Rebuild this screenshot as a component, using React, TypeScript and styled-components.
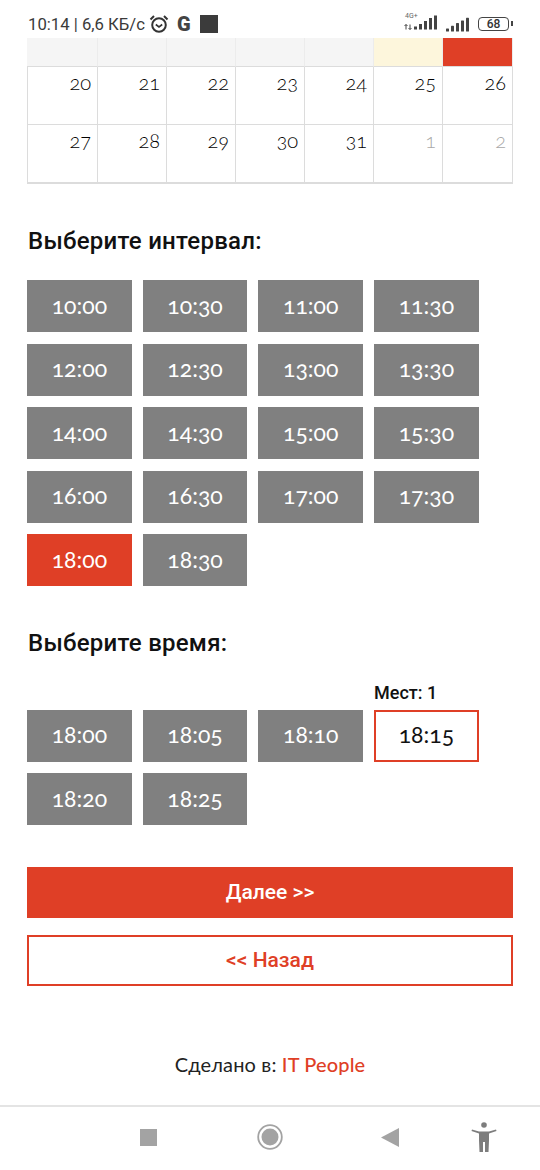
import React from 'react';
import styled, { createGlobalStyle } from 'styled-components';

const accentColor = '#df3f26';
const slotColor = '#808080';
const lineColor = '#dcdcdc';
const bodyFont = '"Lato", "Open Sans", sans-serif';
const headFont = '"Roboto", "Noto Sans", sans-serif';

const GlobalStyle = createGlobalStyle`
  html, body {
    margin: 0;
    padding: 0;
    background: #fff;
  }
`;

const Page = styled.div`
  width: 540px;
  height: 1170px;
  overflow: hidden;
  display: flex;
  flex-direction: column;
  font-family: ${bodyFont};
  color: #111;
`;

const StatusBar = styled.div`
  height: 38px;
  flex: none;
  box-sizing: border-box;
  padding: 10px 31px 0 28px;
  display: flex;
  align-items: center;
  font-family: "Roboto", sans-serif;
  font-size: 16.7px;
  color: #3a3a3a;
`;

const StatusText = styled.span`
  margin-right: 4px;
  white-space: nowrap;
`;

const StatusGlyph = styled.svg`
  flex: none;
`;

const GoogleMark = styled.span`
  font-family: "Roboto", sans-serif;
  font-weight: 900;
  font-size: 20px;
  margin: 0 9px 0 8px;
  color: #444;
`;

const BlackSquare = styled.span`
  width: 18px;
  height: 18px;
  background: #3b3b3b;
`;

const StatusRight = styled.div`
  margin-left: auto;
  display: flex;
  align-items: center;
  gap: 8px;
`;

const Network = styled.div`
  position: relative;
`;

const NetworkLabel = styled.span`
  position: absolute;
  left: 1px;
  top: -3px;
  font-size: 7px;
  line-height: 8px;
  color: #666;
`;

const Battery = styled.div`
  position: relative;
  width: 29px;
  height: 12px;
  border: 1.5px solid #444;
  border-radius: 4px;
  font-size: 12px;
  font-weight: 500;
  line-height: 12px;
  text-align: center;
  color: #333;

  &::after {
    content: '';
    position: absolute;
    right: -5px;
    top: 3px;
    width: 2px;
    height: 5px;
    background: #444;
  }
`;

const Calendar = styled.div`
  margin: 0 27px;
  display: grid;
  grid-template-columns: 71px 69px 69px 69px 69px 69px 70px;
  border-bottom: 1px solid ${lineColor};
`;

const HeaderCell = styled.div<{ $bg: string }>`
  height: 28px;
  background: ${(props) => props.$bg};
  border-right: 1px solid #ececec;
  border-bottom: 1px solid ${lineColor};
`;

const DayCell = styled.div<{ $muted?: boolean }>`
  height: 58px;
  box-sizing: border-box;
  padding: 3px 6px 0 0;
  text-align: right;
  font-size: 20px;
  font-weight: 300;
  line-height: 24px;
  font-variant-numeric: oldstyle-nums;
  color: ${(props) => (props.$muted ? '#a8a8a8' : '#000')};
  border-right: 1px solid ${lineColor};
  border-bottom: 1px solid ${lineColor};

  &:nth-child(7n + 1) {
    border-left: 1px solid ${lineColor};
  }
`;

const Section = styled.section<{ $top: number }>`
  margin: ${(props) => props.$top}px 27px 0;
`;

const Heading = styled.h2`
  margin: 0 0 0 1px;
  font-family: ${headFont};
  font-size: 24px;
  font-weight: 500;
  letter-spacing: 0.25px;
  line-height: 30px;
  color: #111;
`;

const SlotGrid = styled.div<{ $top: number }>`
  margin-top: ${(props) => props.$top}px;
  display: grid;
  grid-template-columns: repeat(4, 104.7px);
  column-gap: 11px;
  row-gap: 11.5px;
`;

const SlotCell = styled.div`
  position: relative;
`;

const SlotButton = styled.button<{ $state?: 'active' | 'picked' }>`
  display: block;
  width: 100%;
  height: 52px;
  box-sizing: border-box;
  padding: 0 0 3px;
  border: ${(props) =>
    props.$state === 'picked' ? `2px solid ${accentColor}` : 'none'};
  border-radius: 0;
  background: ${(props) =>
    props.$state === 'active'
      ? accentColor
      : props.$state === 'picked'
      ? '#fff'
      : slotColor};
  color: ${(props) => (props.$state === 'picked' ? '#111' : '#fff')};
  font-family: ${bodyFont};
  font-size: 23px;
  font-weight: 400;
  font-variant-numeric: oldstyle-nums;
`;

const SeatsBadge = styled.span`
  position: absolute;
  left: 0;
  top: -28px;
  font-family: ${headFont};
  font-size: 18px;
  font-weight: 500;
  line-height: 22px;
  white-space: nowrap;
`;

const Actions = styled.div`
  margin: 41.500px 27px 0;
  display: flex;
  flex-direction: column;
  gap: 17px;
`;

const ActionButton = styled.button<{ $outline?: boolean }>`
  height: 51px;
  box-sizing: border-box;
  border: 2px solid ${accentColor};
  border-radius: 0;
  background: ${(props) => (props.$outline ? '#fff' : accentColor)};
  color: ${(props) => (props.$outline ? accentColor : '#fff')};
  font-family: ${headFont};
  font-size: 21px;
  font-weight: 500;
`;

const Footer = styled.footer`
  margin-top: 65px;
  text-align: center;
  font-size: 20px;
  font-weight: 400;
  letter-spacing: 0.15px;
  line-height: 26px;
  color: #222;
`;

const FooterLink = styled.span`
  color: ${accentColor};
  font-weight: 500;
`;

const NavBar = styled.nav`
  margin-top: auto;
  height: 65px;
  flex: none;
  box-sizing: border-box;
  border-top: 2px solid #e4e4e4;
  padding: 0 0 3px 87px;
  display: grid;
  grid-template-columns: 122px 122px 118px 70px;
  justify-items: center;
  align-items: center;
`;

const NavIcon = styled.svg`
  display: block;
`;

const calendarRows = [
  [['20'], ['21'], ['22'], ['23'], ['24'], ['25'], ['26']],
  [['27'], ['28'], ['29'], ['30'], ['31'], ['1', 'muted'], ['2', 'muted']],
];

const intervals = [
  '10:00', '10:30', '11:00', '11:30',
  '12:00', '12:30', '13:00', '13:30',
  '14:00', '14:30', '15:00', '15:30',
  '16:00', '16:30', '17:00', '17:30',
  '18:00', '18:30',
];

const times = ['18:00', '18:05', '18:10', '18:15', '18:20', '18:25'];

const headerColors = ['#f5f5f5', '#f5f5f5', '#f5f5f5', '#f5f5f5', '#f5f5f5', '#fdf6dc', accentColor];

const Bars = ({ width, x }: { width: number; x: number[] }) => (
  <StatusGlyph width={width} height="15" viewBox={`0 0 ${width} 15`}>
    {x.map((left, i) => {
      const h = 3 + i * 2.7;
      return <rect key={left} x={left} y={14.5 - h} width="3" height={h} fill="#444" rx="0.6" />;
    })}
  </StatusGlyph>
);

const App = () => (
  <Page>
    <GlobalStyle />
    <StatusBar>
      <StatusText>10:14 | 6,6 КБ/с</StatusText>
      <StatusGlyph width="20" height="20" viewBox="0 0 20 20" fill="none" stroke="#333" strokeWidth="2">
        <circle cx="10" cy="11" r="6.8" />
        <path d="M6.8 10.5 L10 13 L13.2 10.5" strokeWidth="1.6" />
        <path d="M1.5 5.5 L5 2 M18.5 5.5 L15 2" />
      </StatusGlyph>
      <GoogleMark>G</GoogleMark>
      <BlackSquare />
      <StatusRight>
        <Network>
          <NetworkLabel>4G+</NetworkLabel>
          <StatusGlyph width="34" height="15" viewBox="0 0 34 15">
            <path d="M2 9.5v5M0.5 11l1.5-1.5L3.500 11M6 9.500v5M4.500 13l1.500 1.500L7.500 13" stroke="#444" strokeWidth="1" fill="none" />
            <rect x="10" y="11.500" width="3" height="3" fill="#444" />
            <rect x="15" y="9" width="3" height="5.500" fill="#444" />
            <rect x="20" y="6" width="3" height="8.500" fill="#444" />
            <rect x="25" y="3" width="3" height="11.500" fill="#444" />
            <rect x="30" y="0.500" width="3" height="14" fill="#444" />
          </StatusGlyph>
        </Network>
        <Bars width={24} x={[0, 5, 10, 15, 20]} />
        <Battery>68</Battery>
      </StatusRight>
    </StatusBar>

    <Calendar>
      {headerColors.map((bg, i) => (
        <HeaderCell key={i} $bg={bg} />
      ))}
      {calendarRows.flat().map(([day, muted]) => (
        <DayCell key={day} $muted={!!muted}>
          {day}
        </DayCell>
      ))}
    </Calendar>

    <Section $top={42}>
      <Heading>Выберите интервал:</Heading>
      <SlotGrid $top={24}>
        {intervals.map((time) => (
          <SlotButton key={time} $state={time === '18:00' ? 'active' : undefined}>
            {time}
          </SlotButton>
        ))}
      </SlotGrid>
    </Section>

    <Section $top={42}>
      <Heading>Выберите время:</Heading>
      <SlotGrid $top={51.6}>
        {times.map((time) => (
          <SlotCell key={time}>
            {time === '18:15' && <SeatsBadge>Мест: 1</SeatsBadge>}
            <SlotButton $state={time === '18:15' ? 'picked' : undefined}>{time}</SlotButton>
          </SlotCell>
        ))}
      </SlotGrid>
    </Section>

    <Actions>
      <ActionButton>Далее &gt;&gt;</ActionButton>
      <ActionButton $outline>&lt;&lt; Назад</ActionButton>
    </Actions>

    <Footer>
      Сделано в: <FooterLink>IT People</FooterLink>
    </Footer>

    <NavBar>
      <NavIcon width="17" height="17" viewBox="0 0 17 17">
        <rect width="17" height="17" fill="#a3a3a3" />
      </NavIcon>
      <NavIcon width="26" height="26" viewBox="0 0 26 26">
        <circle cx="13" cy="13" r="11.8" fill="none" stroke="#a3a3a3" strokeWidth="1.8" />
        <circle cx="13" cy="13" r="8.500" fill="#a3a3a3" />
      </NavIcon>
      <NavIcon width="18" height="19" viewBox="0 0 18 19">
        <path d="M18 0V19L0 9.500Z" fill="#a3a3a3" />
      </NavIcon>
      <NavIcon width="26" height="30" viewBox="0 0 26 30">
        <circle cx="13" cy="3" r="2.800" fill="#7d7d7d" />
        <path d="M1 7.500L8 9.500H18L25 7.500L25.500 9L18 11.500V18.500L17.500 30H14V20H12V30H8.500L8 18.500V11.500L0.500 9Z" fill="#7d7d7d" />
      </NavIcon>
    </NavBar>
  </Page>
);

export default App;
